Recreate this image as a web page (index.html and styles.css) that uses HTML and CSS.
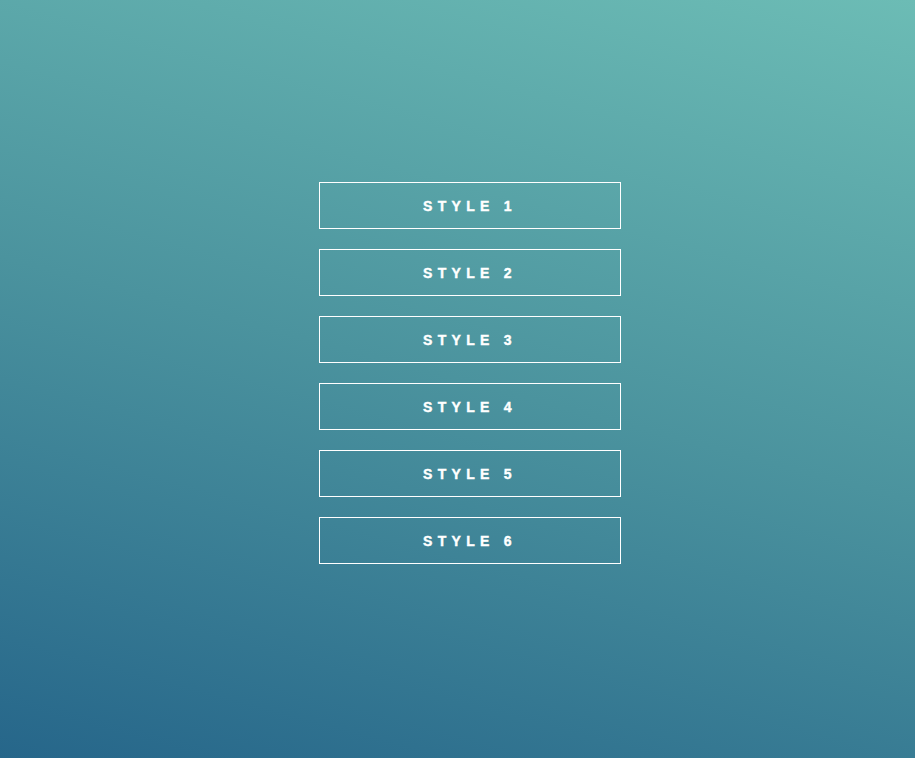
FILE: index.html
```html
<!DOCTYPE html>
<html>
<head>
<meta charset="utf-8">
<link rel="stylesheet" href="styles.css">
</head>
<body>
<main class="stack">
  <a class="btn">Style 1</a>
  <a class="btn">Style 2</a>
  <a class="btn">Style 3</a>
  <a class="btn">Style 4</a>
  <a class="btn">Style 5</a>
  <a class="btn">Style 6</a>
</main>
</body>
</html>
```
FILE: styles.css
```css
html, body {
  margin: 0;
  height: 100%;
}
body {
  background: linear-gradient(15deg, #26668a 0%, #4b939e 50%, #6cbcb5 100%);
  font-family: "Liberation Sans", Arial, sans-serif;
}
.stack {
  display: flex;
  flex-direction: column;
  align-items: center;
  gap: 20px;
  padding-top: 182px;
  padding-left: 25px;
}
.btn {
  box-sizing: border-box;
  width: 302px;
  height: 47px;
  border: 1px solid #fff;
  display: flex;
  align-items: center;
  justify-content: center;
  color: #fff;
  font-weight: 700;
  font-size: 14px;
  letter-spacing: 5.3px;
  text-transform: uppercase;
  -webkit-text-stroke: 0.4px #fff;
}
```
